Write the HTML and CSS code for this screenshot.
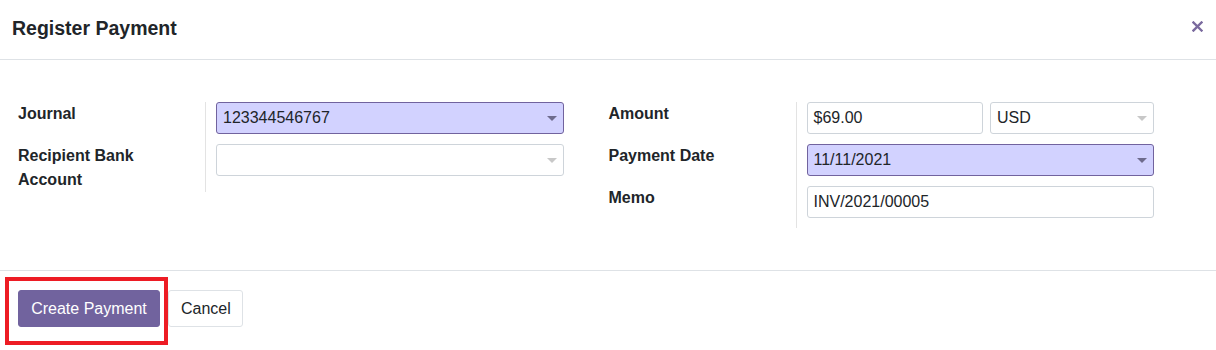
FILE: index.html
```html
<!DOCTYPE html>
<html lang="en">
<head>
  <meta charset="UTF-8">
  <title>Register Payment</title>
  <link rel="stylesheet" href="styles.css">
</head>
<body>
  <div class="modal">
    <!-- header -->
    <div class="modal-header">
      <h4 class="modal-title">Register Payment</h4>
      <button class="btn-close" aria-label="Close">
        <svg width="11" height="11" viewBox="0 0 11 11">
          <path d="M1.5 1.5 L9.5 9.5 M9.5 1.5 L1.5 9.5" stroke="currentColor" stroke-width="2.4" stroke-linecap="square"/>
        </svg>
      </button>
    </div>

    <!-- form body -->
    <div class="modal-body">
      <div class="group">
        <label class="field-label">Journal</label>
        <div class="field-value">
          <div class="input select highlight">123344546767<span class="caret"></span></div>
        </div>
        <label class="field-label">Recipient Bank<br>Account</label>
        <div class="field-value">
          <div class="input select"><span class="caret"></span></div>
        </div>
      </div>

      <div class="group">
        <label class="field-label">Amount</label>
        <div class="field-value">
          <div class="amount-row">
            <div class="input amount">$69.00</div>
            <div class="input select currency">USD<span class="caret"></span></div>
          </div>
        </div>
        <label class="field-label">Payment Date</label>
        <div class="field-value">
          <div class="input select highlight">11/11/2021<span class="caret"></span></div>
        </div>
        <label class="field-label">Memo</label>
        <div class="field-value">
          <div class="input">INV/2021/00005</div>
        </div>
      </div>
    </div>

    <!-- footer -->
    <div class="modal-footer">
      <button class="btn btn-primary">Create Payment</button>
      <button class="btn btn-secondary">Cancel</button>
      <div class="highlight-box"></div>
    </div>
  </div>
</body>
</html>
```

FILE: styles.css
```css
body {
  margin: 0;
  font-family: "Liberation Sans", Arial, sans-serif;
  background: #fff;
  color: #212529;
}
.modal {
  width: 1216px;
  height: 350px;
  background: #fff;
}

/* header */
.modal-header {
  height: 59px;
  border-bottom: 1px solid #dee2e6;
  display: flex;
  align-items: center;
  justify-content: space-between;
  padding: 0 12px;
}
.modal-title {
  margin: 0;
  font-size: 19.5px;
  font-weight: bold;
  color: #212529;
  padding-bottom: 2px;
}
.btn-close {
  background: none;
  border: none;
  padding: 0;
  margin-right: 1px;
  color: #7a6a9e;
  cursor: pointer;
  display: flex;
  margin-top: -6px;
}

/* body */
.modal-body {
  display: flex;
  padding: 42px 18px 42px;
  align-items: flex-start;
}
.group {
  width: 591px;
  display: grid;
  grid-template-columns: 187px 1fr;
}
.group + .group {
  margin-left: 1px;
}
.field-label {
  font-size: 16px;
  font-weight: bold;
  line-height: 24px;
}
.field-value {
  border-left: 1px solid #e3e3e3;
  padding: 0 44px 10px 10px;
}
.input {
  height: 32px;
  box-sizing: border-box;
  border: 1px solid #ced4da;
  border-radius: 3px;
  padding: 0 6px;
  font-size: 16px;
  line-height: 30px;
  color: #212529;
  position: relative;
  background: #fff;
}
.input.highlight {
  background: #d2d2ff;
  border-color: #71639e;
}
.caret {
  position: absolute;
  right: 6px;
  top: 13px;
  border-left: 5px solid transparent;
  border-right: 5px solid transparent;
  border-top: 5px solid #c8c8c8;
}
.highlight .caret {
  border-top-color: #6e6b8d;
}
.amount-row {
  display: flex;
  gap: 7px;
}
.amount {
  flex: 1;
}
.currency {
  width: 164px;
}

/* footer */
.modal-footer {
  border-top: 1px solid #dee2e6;
  padding: 19px 18px 20px;
  display: flex;
  gap: 8px;
  position: relative;
}
.btn {
  height: 37px;
  font-family: "Liberation Sans", Arial, sans-serif;
  font-size: 16px;
  border-radius: 3px;
  padding: 0 12px;
  cursor: pointer;
}
.btn-primary {
  background: #71639e;
  border: 1px solid #71639e;
  color: #fff;
  width: 142px;
}
.btn-secondary {
  background: #fff;
  border: 1px solid #dee2e6;
  color: #212529;
  width: 75px;
}
.highlight-box {
  position: absolute;
  left: 5px;
  top: 6px;
  width: 155px;
  height: 60px;
  border: 4px solid #ed1c24;
}
```
